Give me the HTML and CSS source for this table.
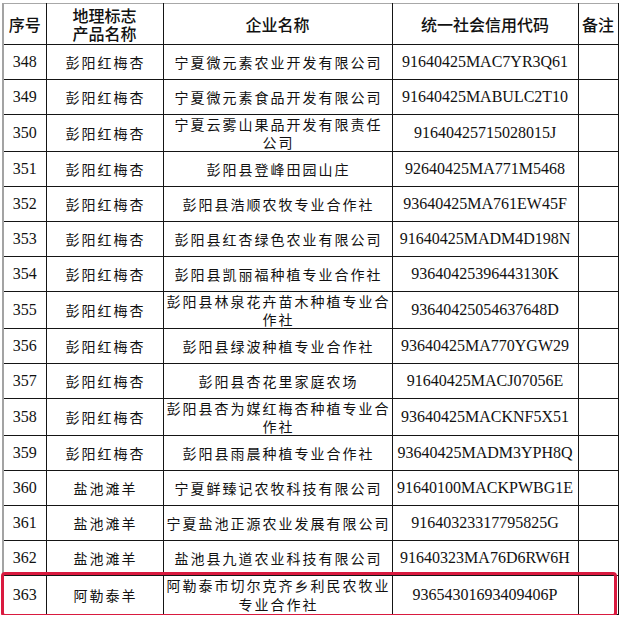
FILE: index.html
```html
<!DOCTYPE html>
<html lang="zh-CN">
<head>
<meta charset="utf-8">
<title>地理标志产品企业名单</title>
<link rel="stylesheet" href="styles.css">
</head>
<body>
<div class="sheet">
  <table class="list">
    <colgroup>
      <col class="c-no"><col class="c-prod"><col class="c-name"><col class="c-code"><col class="c-note">
    </colgroup>
    <thead>
      <tr class="head">
        <th class="first">序号</th>
        <th>地理标志<br>产品名称</th>
        <th>企业名称</th>
        <th class="code-col">统一社会信用代码</th>
        <th>备注</th>
      </tr>
    </thead>
    <tbody>
      <tr class="r1"><td class="first num">348</td><td class="cn">彭阳红梅杏</td><td class="cn">宁夏微元素农业开发有限公司</td><td class="code code-col">91640425MAC7YR3Q61</td><td></td></tr>
      <tr class="r1"><td class="first num">349</td><td class="cn">彭阳红梅杏</td><td class="cn">宁夏微元素食品开发有限公司</td><td class="code code-col">91640425MABULC2T10</td><td></td></tr>
      <tr class="r2"><td class="first num">350</td><td class="cn">彭阳红梅杏</td><td class="cn">宁夏云雾山果品开发有限责任<br>公司</td><td class="code code-col">91640425715028015J</td><td></td></tr>
      <tr class="r1"><td class="first num">351</td><td class="cn">彭阳红梅杏</td><td class="cn">彭阳县登峰田园山庄</td><td class="code code-col">92640425MA771M5468</td><td></td></tr>
      <tr class="r1"><td class="first num">352</td><td class="cn">彭阳红梅杏</td><td class="cn">彭阳县浩顺农牧专业合作社</td><td class="code code-col">93640425MA761EW45F</td><td></td></tr>
      <tr class="r1"><td class="first num">353</td><td class="cn">彭阳红梅杏</td><td class="cn">彭阳县红杏绿色农业有限公司</td><td class="code code-col">91640425MADM4D198N</td><td></td></tr>
      <tr class="r1"><td class="first num">354</td><td class="cn">彭阳红梅杏</td><td class="cn">彭阳县凯丽福种植专业合作社</td><td class="code code-col">93640425396443130K</td><td></td></tr>
      <tr class="r2"><td class="first num">355</td><td class="cn">彭阳红梅杏</td><td class="cn">彭阳县林泉花卉苗木种植专业合<br>作社</td><td class="code code-col">93640425054637648D</td><td></td></tr>
      <tr class="r1"><td class="first num">356</td><td class="cn">彭阳红梅杏</td><td class="cn">彭阳县绿波种植专业合作社</td><td class="code code-col">93640425MA770YGW29</td><td></td></tr>
      <tr class="r1"><td class="first num">357</td><td class="cn">彭阳红梅杏</td><td class="cn">彭阳县杏花里家庭农场</td><td class="code code-col">91640425MACJ07056E</td><td></td></tr>
      <tr class="r2"><td class="first num">358</td><td class="cn">彭阳红梅杏</td><td class="cn">彭阳县杏为媒红梅杏种植专业合<br>作社</td><td class="code code-col">93640425MACKNF5X51</td><td></td></tr>
      <tr class="r1"><td class="first num">359</td><td class="cn">彭阳红梅杏</td><td class="cn">彭阳县雨晨种植专业合作社</td><td class="code code-col">93640425MADM3YPH8Q</td><td></td></tr>
      <tr class="r1"><td class="first num">360</td><td class="cn">盐池滩羊</td><td class="cn">宁夏鲜臻记农牧科技有限公司</td><td class="code code-col">91640100MACKPWBG1E</td><td></td></tr>
      <tr class="r1"><td class="first num">361</td><td class="cn">盐池滩羊</td><td class="cn">宁夏盐池正源农业发展有限公司</td><td class="code code-col">91640323317795825G</td><td></td></tr>
      <tr class="r1"><td class="first num">362</td><td class="cn">盐池滩羊</td><td class="cn">盐池县九道农业科技有限公司</td><td class="code code-col">91640323MA76D6RW6H</td><td></td></tr>
      <tr class="r3"><td class="first num">363</td><td class="cn">阿勒泰羊</td><td class="cn">阿勒泰市切尔克齐乡利民农牧业<br>专业合作社</td><td class="code code-col">93654301693409406P</td><td></td></tr>
    </tbody>
  </table>
  <div class="highlight"></div>
</div>
</body>
</html>
```

FILE: styles.css
```css
html, body {
  margin: 0;
  padding: 0;
  background: #ffffff;
}

.sheet {
  position: relative;
  padding: 3px 0 0 2px;
  width: 617px;
}

.list {
  border-collapse: collapse;
  table-layout: fixed;
  width: 615px;
  color: #111;
}

.c-no { width: 43px; }
.c-prod { width: 117px; }
.c-name { width: 229px; }
.c-code { width: 186px; }
.c-note { width: 40px; }

.list th,
.list td {
  border: 1px solid #151515;
  padding: 0;
  text-align: center;
  vertical-align: middle;
  overflow: hidden;
  white-space: nowrap;
}

.list th {
  border-top-color: #a8a8a8;
  font-family: "Noto Sans CJK SC", "Liberation Sans", sans-serif;
  font-size: 16px;
  font-weight: 500;
  line-height: 18px;
  height: 40px;
}

.list .first {
  border-left: 2px solid #a3a3a3;
}

.list .code-col {
  border-left-color: #a0a0a0;
}

.r1 td { height: 34px; }
.r2 td { height: 36px; }
.r3 td { height: 38px; }

.num,
.code {
  font-family: "Liberation Serif", "Times New Roman", serif;
  font-size: 16px;
  line-height: 18px;
}

.cn {
  font-family: "Noto Sans CJK SC", "Liberation Sans", sans-serif;
  font-size: 14px;
  letter-spacing: 2px;
  padding-left: 2px !important;
  line-height: 18px;
}

.r3 .cn {
  line-height: 19px;
}

.highlight {
  position: absolute;
  left: 1px;
  top: 572px;
  width: 610px;
  height: 39px;
  border: 3px solid #d91a3f;
  border-radius: 4px;
}
```
